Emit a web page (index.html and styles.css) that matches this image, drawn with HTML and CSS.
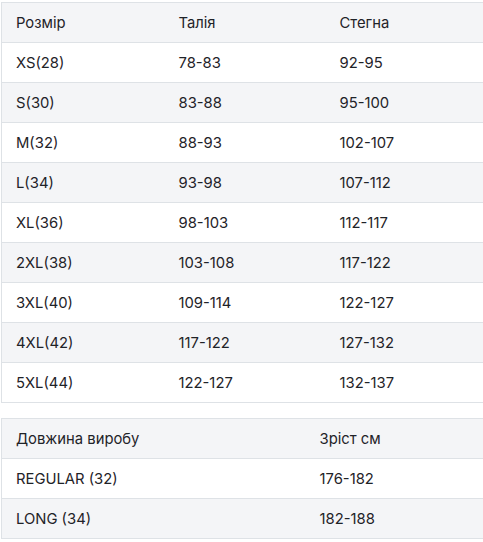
FILE: index.html
```html
<!DOCTYPE html>
<html lang="uk">
<head>
<meta charset="utf-8">
<link rel="stylesheet" href="styles.css">
</head>
<body>
<div class="wrap">
  <table class="sizes sizes-main">
    <colgroup><col class="c1"><col class="c2"><col></colgroup>
    <tr><td>Розмір</td><td>Талія</td><td>Стегна</td></tr>
    <tr><td>XS(28)</td><td>78-83</td><td>92-95</td></tr>
    <tr><td>S(30)</td><td>83-88</td><td>95-100</td></tr>
    <tr><td>M(32)</td><td>88-93</td><td>102-107</td></tr>
    <tr><td>L(34)</td><td>93-98</td><td>107-112</td></tr>
    <tr><td>XL(36)</td><td>98-103</td><td>112-117</td></tr>
    <tr><td>2XL(38)</td><td>103-108</td><td>117-122</td></tr>
    <tr><td>3XL(40)</td><td>109-114</td><td>122-127</td></tr>
    <tr><td>4XL(42)</td><td>117-122</td><td>127-132</td></tr>
    <tr><td>5XL(44)</td><td>122-127</td><td>132-137</td></tr>
  </table>
  <table class="sizes sizes-length">
    <colgroup><col class="l1"><col></colgroup>
    <tr><td>Довжина виробу</td><td>Зріст см</td></tr>
    <tr><td>REGULAR (32)</td><td>176-182</td></tr>
    <tr><td>LONG (34)</td><td>182-188</td></tr>
  </table>
</div>
</body>
</html>
```
FILE: styles.css
```css
html, body {
  margin: 0;
  padding: 0;
  background: #ffffff;
  overflow: hidden;
}
.wrap {
  width: 483px;
  overflow: hidden;
  padding: 2px 0 0 1px;
  font-family: Inter, "Noto Sans", sans-serif;
  font-size: 14.8px;
  color: #1f2328;
}
.sizes {
  border-collapse: collapse;
  width: 500px;
  table-layout: fixed;
  border: 1px solid #dee2e6;
}
.sizes td {
  height: 39px;
  padding: 0 0 0 14px;
  border-top: 1px solid #dee2e6;
  border-bottom: 1px solid #dee2e6;
  vertical-align: middle;
  white-space: nowrap;
}
.sizes tr:nth-child(odd) td {
  background: #f4f5f7;
}
.sizes-main {
  margin-bottom: 15px;
}
.c1 { width: 163px; }
.c2 { width: 161px; }
.l1 { width: 304px; }
```
